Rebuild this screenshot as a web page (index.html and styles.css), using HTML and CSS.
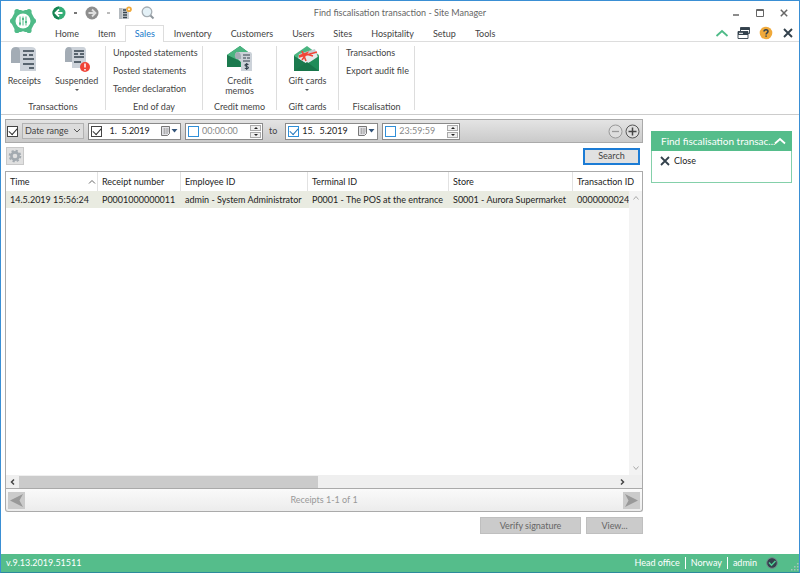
FILE: index.html
```html
<!DOCTYPE html>
<html lang="en">
<head>
<meta charset="utf-8">
<title>Find fiscalisation transaction - Site Manager</title>
<link rel="stylesheet" href="styles.css">
</head>
<body>
<div class="window">
  <header class="top">
    <div class="logo">
      <svg width="28" height="28" viewBox="0 0 28 28" aria-hidden="true">
        <path d="M8 4.500H20L25 14 20 23.500H8L3 14Z" fill="#4fbb88" stroke="#4fbb88" stroke-width="3" stroke-linejoin="round"/>
        <g fill="#4fbb88"><circle cx="8" cy="4.500" r="2.600"/><circle cx="20" cy="4.500" r="2.600"/><circle cx="3.800" cy="14" r="2.800"/><circle cx="24.200" cy="14" r="2.800"/><circle cx="8" cy="23.500" r="2.600"/><circle cx="20" cy="23.500" r="2.600"/></g>
        <g fill="#fff"><circle cx="14" cy="1.500" r="2.200"/><circle cx="14" cy="26.500" r="2.200"/></g>
        <circle cx="14" cy="14" r="7.500" fill="#fff"/>
        <path d="M11 9.500v9M14 9.500v9M17 9.500v9" stroke="#4fbb88" stroke-width="1"/>
        <path d="M10 16.500h2M13 12h2M16 15h2" stroke="#4fbb88" stroke-width="2"/>
      </svg>
    </div>
    <div class="bars">
      <div class="titlebar">
        <div class="quick">
          <button class="icon" aria-label="Back"><svg width="14" height="14" viewBox="0 0 14 14"><circle cx="7" cy="7" r="6.500" fill="#35ae77"/><path d="M7 .5A6.500 6.500 0 0 0 7 13.500Z" fill="#168453"/><path d="M7 3.500 3.500 7 7 10.500M4 7h6.500" fill="none" stroke="#fff" stroke-width="1.800"/></svg></button>
          <span class="dot"></span>
          <button class="icon" aria-label="Forward"><svg width="14" height="14" viewBox="0 0 14 14"><circle cx="7" cy="7" r="6.500" fill="#8e8e8e"/><path d="M7 3.500 10.500 7 7 10.500M10 7H3.500" fill="none" stroke="#dedede" stroke-width="1.800"/></svg></button>
          <span class="dot pale"></span>
          <button class="icon" aria-label="New"><svg width="14" height="14" viewBox="0 0 14 14"><path d="M1 2h10v11H1z" fill="#cfd3d6"/><path d="M1 2h3v11H1z" fill="#b4babf"/><path d="M5 4h3M5 6.500h4M5 9h4M5 11.500h4" stroke="#39454f" stroke-width="1.400"/><circle cx="11" cy="3.200" r="2.800" fill="#f0a93a"/><circle cx="11" cy="3.200" r="1" fill="#fff"/></svg></button>
          <button class="icon find" aria-label="Find"><svg width="14" height="14" viewBox="0 0 14 14"><circle cx="6" cy="5.800" r="4.800" fill="#e4f1f7" stroke="#a5adb3" stroke-width="1.300"/><path d="m9.500 9.500 3 3" stroke="#8f979d" stroke-width="2"/></svg></button>
        </div>
        <h1>Find fiscalisation transaction - Site Manager</h1>
        <div class="winctl">
          <button class="icon" aria-label="Minimise"><svg width="8" height="8" viewBox="0 0 8 8"><path d="M1 6h6" stroke="#666" stroke-width="1.500"/></svg></button>
          <button class="icon" aria-label="Maximise"><svg width="8" height="8" viewBox="0 0 8 8"><path d="M.5.5h7v7h-7zM.5 1.500h7" fill="none" stroke="#666"/></svg></button>
          <button class="icon" aria-label="Close window"><svg width="8" height="8" viewBox="0 0 8 8"><path d="m.8.8 6.400 6.400M7.200.8.8 7.200" stroke="#666" stroke-width="1.500"/></svg></button>
        </div>
      </div>
      <nav class="tabs">
        <a href="#">Home</a><a href="#">Item</a><a href="#" class="active">Sales</a><a href="#">Inventory</a><a href="#">Customers</a><a href="#">Users</a><a href="#">Sites</a><a href="#">Hospitality</a><a href="#">Setup</a><a href="#">Tools</a>
        <div class="tabctl">
          <button class="icon" aria-label="Collapse ribbon"><svg width="14" height="14" viewBox="0 0 14 14"><path d="m1.500 10 5.500-5 5.500 5" fill="none" stroke="#4fbb88" stroke-width="1.800"/></svg></button>
          <button class="icon" aria-label="Windows"><svg width="14" height="14" viewBox="0 0 14 14"><path d="M3.500 1.500h9v6h-9z" fill="#fff" stroke="#44515b"/><path d="M3.500 1.500h9v2.500h-9z" fill="#33414c"/><path d="M1 5.500h10v7H1z" fill="#fff" stroke="#44515b"/><path d="M1 5.500h10V9H1z" fill="#33414c"/><path d="M2 7.300h4" stroke="#fff"/></svg></button>
          <button class="icon" aria-label="Help"><svg width="14" height="14" viewBox="0 0 14 14"><circle cx="7" cy="7" r="6.300" fill="#f0a93a"/><path d="M5 5.500c.1-2.500 4-2.400 4 0 0 1.300-1.900 1.300-1.900 2.900M7.100 9.500v1.300" fill="none" stroke="#33414c" stroke-width="1.500"/></svg></button>
          <button class="icon" aria-label="Close page"><svg width="14" height="14" viewBox="0 0 14 14"><path d="m3 3 8 8M11 3l-8 8" stroke="#33414c" stroke-width="1.900"/></svg></button>
        </div>
      </nav>
    </div>
  </header>

  <section class="ribbon">
    <div class="group">
      <div class="tools">
        <button class="tool"><svg width="26" height="26" viewBox="0 0 26 26"><path d="M4 1h16q5 0 5 4v20H9V6Q9 1 4 1Z" fill="#ccd2d9"/><path d="M5 1Q0 1 0 6v11h9V5Q9 1 5 1Z" fill="#a3acb5"/><path d="M12 5h11M12 9h4M18 9h4M12 13h11M12 18h11M18 22h5" stroke="#33414c" stroke-width="1.500"/></svg><span>Receipts</span></button>
        <i class="split"></i>
        <button class="tool"><svg width="26" height="26" viewBox="0 0 26 26"><path d="M4 1h15q3 0 3 4v17H8V6Q8 1 4 1Z" fill="#ccd2d9"/><path d="M5 1Q1 1 1 6v10h7V5Q8 1 5 1Z" fill="#a3acb5"/><path d="M10 5h10M10 8h4M16 8h4M10 11h10M10 16h7" stroke="#33414c" stroke-width="1.400"/><circle cx="21" cy="21" r="5" fill="#f04437"/><path d="M21 17.500v4M21 23v1.500" stroke="#fff" stroke-width="1.500"/></svg><span>Suspended</span><b class="more"></b></button>
      </div>
      <h2>Transactions</h2>
    </div>
    <div class="group">
      <div class="links"><a href="#">Unposted statements</a><a href="#">Posted statements</a><a href="#">Tender declaration</a></div>
      <h2>End of day</h2>
    </div>
    <div class="group">
      <div class="tools">
        <button class="tool credit"><svg width="26" height="26" viewBox="0 0 26 26"><path d="M0 9 13 0l12 9v12H0Z" fill="#1f8c59"/><path d="M0 9 13 0l12 9-12 7Z" fill="#4bb581"/><path d="M0 9v12h13v-6Z" fill="#1b7a4e"/><path d="M10 6h13q2 0 2 3v16H14v-9l-5-5q-2-3 1-5Z" fill="#ccd2d9"/><path d="M10 6q4 0 4 5v2H9q-3-4 1-7Z" fill="#a3acb5"/><path d="M16 9h7M16 12h3M20 12h3M16 15h7" stroke="#33414c" stroke-width="1.200"/><path d="M21.500 18.500q-3.500-1-3.500.8c0 1.500 3.500.8 3.500 2.400q-.5 1.600-3.700.6M19.700 17v7" fill="none" stroke="#33414c" stroke-width="1.100"/></svg><span>Credit memos</span></button>
      </div>
      <h2>Credit memo</h2>
    </div>
    <div class="group">
      <div class="tools">
        <button class="tool"><svg width="26" height="26" viewBox="0 0 26 26"><path d="M0 9 13 0l12 9v16H0Z" fill="#4bb581"/><path d="m5 8 16-5 3 9-13 6-7-5Z" fill="#c5ccd2"/><path d="m6 9 16-3 2 7-13 5-6-5Z" fill="#e6e9eb"/><path d="m5 11 18-5M8 5l4 10M5 10l8-3-5 7M12 8l7 2" fill="none" stroke="#f04437" stroke-width="1.600"/><path d="m0 10 13 8 12-8v15H0Z" fill="#1f8c59"/><path d="m0 10 13 8-13 7Z" fill="#1b7a4e"/><path d="M0 25 13 16l12 9Z" fill="#18754a"/></svg><span>Gift cards</span><b class="more"></b></button>
      </div>
      <h2>Gift cards</h2>
    </div>
    <div class="group">
      <div class="links"><a href="#">Transactions</a><a href="#">Export audit file</a></div>
      <h2>Fiscalisation</h2>
    </div>
  </section>

  <div class="content">
    <main>
      <form class="filter">
        <input type="checkbox" class="check" checked aria-label="Use date range">
        <div class="pick"><select aria-label="Filter"><option>Date range</option></select><svg width="8" height="6" viewBox="0 0 8 6"><path d="m1 1 3 3 3-3" fill="none" stroke="#555"/></svg></div>
        <div class="field date"><input type="checkbox" class="check" checked aria-label="Use start date"><input type="text" value="  1.  5.2019" aria-label="Start date"><button type="button" class="icon" aria-label="Open start calendar"><svg width="17" height="10" viewBox="0 0 17 10"><path d="M.5.5h8v7l-2 2h-6z" fill="#e4e4e8" stroke="#777"/><path d="M2 3h6M2 5h6M2 7h5M3.500 2v6M6 2v6" stroke="#999" stroke-width=".6"/><path d="M10.500 3h6l-3 3.500z" fill="#33547a"/></svg></button></div>
        <div class="field time"><input type="checkbox" class="check blue" aria-label="Use start time"><input type="text" value="00:00:00" aria-label="Start time"><span class="spin"><button type="button" aria-label="Later start"></button><button type="button" class="down" aria-label="Earlier start"></button></span></div>
        <span class="to">to</span>
        <div class="field date"><input type="checkbox" class="check blue" checked aria-label="Use end date"><input type="text" value="15.  5.2019" aria-label="End date"><button type="button" class="icon" aria-label="Open end calendar"><svg width="17" height="10" viewBox="0 0 17 10"><path d="M.5.5h8v7l-2 2h-6z" fill="#e4e4e8" stroke="#777"/><path d="M2 3h6M2 5h6M2 7h5M3.500 2v6M6 2v6" stroke="#999" stroke-width=".6"/><path d="M10.500 3h6l-3 3.500z" fill="#33547a"/></svg></button></div>
        <div class="field time"><input type="checkbox" class="check blue" aria-label="Use end time"><input type="text" value="23:59:59" aria-label="End time"><span class="spin"><button type="button" aria-label="Later end"></button><button type="button" class="down" aria-label="Earlier end"></button></span></div>
        <div class="addrem">
          <button type="button" class="icon" aria-label="Remove filter"><svg width="15" height="15" viewBox="0 0 15 15"><circle cx="7.500" cy="7.500" r="6.500" fill="#dedede" stroke="#999"/><path d="M4 7.500h7" stroke="#999" stroke-width="1.300"/></svg></button>
          <button type="button" class="icon" aria-label="Add filter"><svg width="15" height="15" viewBox="0 0 15 15"><circle cx="7.500" cy="7.500" r="6.500" fill="#dedede" stroke="#555"/><path d="M3.500 7.500h8M7.500 3.500v8" stroke="#444" stroke-width="1.500"/></svg></button>
        </div>
      </form>
      <div class="actions">
        <button class="gear" aria-label="Settings"><svg width="14" height="14" viewBox="0 0 14 14"><circle cx="7" cy="7" r="5.300" fill="none" stroke="#a3aab0" stroke-width="2" stroke-dasharray="2.200 1.960"/><circle cx="7" cy="7" r="3.600" fill="none" stroke="#a3aab0" stroke-width="2.600"/></svg></button>
        <button class="search">Search</button>
      </div>
      <div class="grid">
        <div class="rows">
          <table>
            <colgroup><col class="c1"><col class="c2"><col class="c3"><col class="c4"><col class="c5"><col></colgroup>
            <thead><tr><th><div class="sort">Time<svg width="8" height="6" viewBox="0 0 8 6"><path d="m1 4.500 3-3 3 3" fill="none" stroke="#666"/></svg></div></th><th>Receipt number</th><th>Employee ID</th><th>Terminal ID</th><th>Store</th><th>Transaction ID</th></tr></thead>
            <tbody><tr><td>14.5.2019 15:56:24</td><td>P0001000000011</td><td>admin - System Administrator</td><td>P0001 - The POS at the entrance</td><td>S0001 - Aurora Supermarket</td><td>0000000024</td></tr></tbody>
          </table>
          <div class="vscroll"><svg width="8" height="6" viewBox="0 0 8 6"><path d="m1.500 4.500 2.500-3 2.500 3" fill="none" stroke="#aaa"/></svg><svg width="8" height="6" viewBox="0 0 8 6"><path d="m1.500 1.500 2.500 3 2.500-3" fill="none" stroke="#aaa"/></svg></div>
        </div>
        <div class="hscroll"><svg width="13" height="8" viewBox="0 0 13 8"><path d="M8 1.500 5.500 4 8 6.500" fill="none" stroke="#444" stroke-width="1.500"/></svg><div class="track"><div class="thumb"></div></div><svg width="13" height="8" viewBox="0 0 13 8"><path d="M5 1.500 7.500 4 5 6.500" fill="none" stroke="#444" stroke-width="1.500"/></svg></div>
      </div>
      <div class="pager">
        <button aria-label="Previous page"><svg width="15" height="15" viewBox="0 0 15 15"><path d="M14 1 1 7.500 14 14l-3.500-6.500z" fill="#999"/></svg></button>
        <span>Receipts 1-1 of 1</span>
        <button aria-label="Next page"><svg width="15" height="15" viewBox="0 0 15 15"><path d="M1 1l13 6.500L1 14l3.500-6.500z" fill="#999"/></svg></button>
      </div>
      <div class="commands"><button class="verify" disabled>Verify signature</button><button class="view" disabled>View...</button></div>
    </main>
    <aside>
      <div class="panel">
        <div class="panelhead"><h2>Find fiscalisation transac...</h2><svg width="12" height="8" viewBox="0 0 12 8"><path d="m1 6.500 5-4.500 5 4.500" fill="none" stroke="#fff" stroke-width="1.800"/></svg></div>
        <button class="close"><svg width="10" height="10" viewBox="0 0 10 10"><path d="m1 1 8 8M9 1 1 9" stroke="#33414c" stroke-width="1.800"/></svg>Close</button>
      </div>
    </aside>
  </div>

  <footer>
    <span class="version">v.9.13.2019.51511</span>
    <span>Head office</span><span>Norway</span><span>admin</span>
    <svg width="12" height="12" viewBox="0 0 12 12"><circle cx="6" cy="6" r="5.300" fill="#33414c" stroke="#75858c"/><path d="m3 5.500 2.500 2.700 4-4.200" fill="none" stroke="#4fd196" stroke-width="1.500"/></svg>
    <svg class="grip" width="8" height="8" viewBox="0 0 8 8"><path d="M6 0h1.500v1.500H6zM3 3h1.500v1.500H3zM6 3h1.500v1.500H6zM0 6h1.500v1.500H0zM3 6h1.500v1.500H3zM6 6h1.500v1.500H6z" fill="#a9c4b7"/></svg>
  </footer>
</div>
</body>
</html>
```
FILE: styles.css
```css
* { box-sizing: border-box; }
body { margin: 0; font: 9px/12px Lato, Roboto, sans-serif; color: #444; background: #fff; }
button, input, select { font: inherit; color: inherit; margin: 0; padding: 0; border: 0; background: none; border-radius: 0; }
a { color: inherit; text-decoration: none; }
h1, h2 { margin: 0; font: inherit; font-weight: normal; }
svg { display: block; flex: none; }
.icon { display: flex; align-items: center; justify-content: center; flex: none; }

.window { min-height: 100vh; display: flex; flex-direction: column; border: 1px solid #3a8fd4; border-bottom-color: #2c8a9c; }
.top { display: flex; }
.logo { width: 44px; padding: 6px 0 0 8px; }
.bars { flex: 1; }
.titlebar { height: 24px; display: grid; grid-template-columns: 1fr auto 1fr; align-items: center; margin-left: -44px; }
.titlebar h1 { color: #666; }
.quick { display: flex; align-items: center; padding-left: 51px; }
.dot { width: 3px; height: 2px; margin: 0 8px; background: #777; }
.dot.pale { background: #bbb; }
.find { margin-left: 9px; }
.winctl { display: flex; justify-content: flex-end; gap: 16px; padding-right: 11px; }
.tabs { height: 17px; display: flex; border-bottom: 1px solid #ddd; margin-left: -44px; padding-left: 44px; }
.tabs a { padding: 3px 9px 0 10px; }
.tabs a.active { color: #1979ca; background: #fff; border: 1px solid #ddd; border-bottom: 0; padding: 2px 8px 0 9px; height: 17px; }
.tabctl { margin-left: auto; display: flex; gap: 8px; padding-right: 4px; align-items: center; }

.ribbon { height: 73px; display: grid; grid-template-columns: 105px 97px 74px 62px 76px; padding: 4px 0; border-bottom: 1px solid #ccc; }
.group { display: flex; flex-direction: column; justify-content: space-between; border-right: 1px solid #ddd; }
.group h2 { text-align: center; line-height: 7px; }
.tools { display: flex; justify-content: center; }
.tool { display: flex; flex-direction: column; align-items: center; line-height: 10px; padding: 0 7px; }
.tool svg { margin-bottom: 4px; }
.split { width: 1px; height: 47px; background: #ddd; }
.credit { width: 52px; }
.more { margin-top: 3px; border: 2px solid transparent; border-top-color: #555; }
.links { display: flex; flex-direction: column; gap: 6px; padding: 1px 7px 0; white-space: nowrap; }

.content { flex: 1; display: flex; gap: 8px; padding: 4px 7px 20px 4px; }
main { flex: 1; min-width: 0; display: flex; flex-direction: column; }
aside { width: 141px; padding-top: 12px; }
.filter { height: 24px; display: flex; align-items: center; gap: 4px; padding: 0 2px 0 1px; border: 1px solid #aaa; background: linear-gradient(#e4e4e4, #cacaca); }
.check { appearance: none; width: 11px; height: 11px; flex: none; background: #fff; border: 1px solid #444; display: flex; align-items: center; justify-content: center; }
.check:checked::before { content: ""; width: 7px; height: 4px; border: solid #333; border-width: 0 0 1px 1px; transform: translateY(-1px) rotate(-48deg); }
.check.blue { border-color: #2f8fd8; }
.check.blue:checked::before { border-color: #2579bd; }
.pick { position: relative; width: 62px; }
.pick select { appearance: none; width: 100%; height: 16px; padding-left: 2px; border: 1px solid #b2b2b2; background: #dcdcdc; }
.pick svg { position: absolute; right: 3px; top: 5px; pointer-events: none; }
.field { display: flex; align-items: center; height: 17px; padding: 0 2px; border: 1px solid #8a8a8a; background: #fff; color: #222; }
.field input[type="text"] { flex: 1; min-width: 0; padding-left: 3px; white-space: pre; }
.date { width: 93px; }
.time { width: 78px; padding-right: 1px; color: #888; }
.spin { width: 11px; display: flex; flex-direction: column; gap: 1px; }
.spin button { height: 6px; border: 1px solid #aaa; background: #eee; display: flex; align-items: center; justify-content: center; }
.spin button::before { content: ""; border: 2px solid transparent; border-top-width: 0; border-bottom-color: #222; }
.spin .down::before { border-width: 2px 2px 0; border-color: #222 transparent transparent; }
.to { padding: 0 4px 0 2px; }
.addrem { margin-left: auto; display: flex; gap: 2px; }

.actions { display: flex; justify-content: space-between; align-items: center; padding: 4px 3px 6px 1px; }
.gear { width: 18px; height: 18px; display: flex; align-items: center; justify-content: center; border: 1px solid #c8c8c8; background: #e0e0e0; }
.search { width: 57px; height: 17px; border: 2px solid #1c7cd5; background: #e1e1e1; }

.grid { flex: 1; display: flex; flex-direction: column; border: 1px solid #aaa; }
.rows { flex: 1; display: grid; grid-template: 1fr / minmax(0, 1fr) 13px; align-items: start; }
table { grid-column: 1 / 3; grid-row: 1; width: 100%; table-layout: fixed; border-collapse: separate; border-spacing: 0; color: #222; }
th { height: 19px; padding: 0 0 0 4px; font-weight: normal; text-align: left; border-right: 1px solid #e2e2e2; white-space: nowrap; }
th:last-child { border: 0; }
td { height: 17px; padding: 0 0 0 4px; background: #e9ebe1; white-space: nowrap; }
.c1 { width: 92px; }
.c2 { width: 83px; }
.c3 { width: 127px; }
.c4 { width: 141px; }
.c5 { width: 124px; }
.sort { display: flex; justify-content: space-between; align-items: center; padding-right: 1px; }
.vscroll { grid-column: 2; grid-row: 1; align-self: stretch; z-index: 1; margin-top: 19px; padding: 4px 0; display: flex; flex-direction: column; justify-content: space-between; align-items: center; background: #f3f3f3; }
.hscroll { height: 13px; display: flex; align-items: center; padding-right: 13px; background: #efefef; }
.track { flex: 1; height: 12px; }
.thumb { width: 50%; height: 100%; background: #cbcbcb; }
.pager { height: 23px; display: flex; align-items: center; justify-content: space-between; padding: 0 2px; color: #999; border: 1px solid #aaa; border-top: 0; border-radius: 0 0 3px 3px; background: linear-gradient(#fafafa, #ececec); }
.pager button { width: 17px; height: 17px; display: flex; align-items: center; justify-content: center; background: #cbcbcb; }
.commands { display: flex; justify-content: flex-end; gap: 5px; padding-top: 5px; }
.commands button { height: 17px; background: #cbcbcb; border: 1px solid #bfbfbf; color: #666; }
.commands .verify { width: 101px; }
.commands .view { width: 57px; }

.panel { height: 52px; border: 1px solid #84d0aa; }
.panelhead { height: 20px; display: flex; align-items: center; margin: -1px -1px 0; padding: 0 6px 0 10px; color: #fff; background: #55bd8b; font-size: 10px; }
.panelhead h2 { flex: 1; min-width: 0; white-space: nowrap; }
.panelhead svg { margin-left: -12px; }
.close { display: flex; align-items: center; gap: 4px; padding: 4px 8px; color: #222; }

footer { height: 18px; display: flex; align-items: center; background: #55bd8b; color: #fff; }
footer span { padding: 0 5px; }
footer span + span + span { border-left: 1px solid #fff; }
footer .version { margin-right: auto; }
footer svg { margin-left: 4px; }
footer .grip { margin: 8px 0 0 13px; }
```
